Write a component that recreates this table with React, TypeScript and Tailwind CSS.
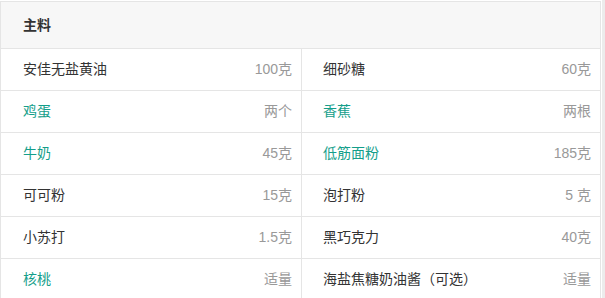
const rows: [string, string, boolean, string, string, boolean][] = [
  ["安佳无盐黄油", "100克", false, "细砂糖", "60克", false],
  ["鸡蛋", "两个", true, "香蕉", "两根", true],
  ["牛奶", "45克", true, "低筋面粉", "185克", true],
  ["可可粉", "15克", false, "泡打粉", "5 克", false],
  ["小苏打", "1.5克", false, "黑巧克力", "40克", false],
  ["核桃", "适量", true, "海盐焦糖奶油酱（可选）", "适量", false],
]

function Cell({ name, amount, green, left }: { name: string; amount: string; green: boolean; left?: boolean }) {
  return (
    <div
      className={
        left
          ? "h-[42px] border-b border-r border-[#e5e5e5] flex items-center justify-between pl-[22px] pr-[9px]"
          : "h-[42px] border-b border-[#e5e5e5] flex items-center justify-between pl-[21px] pr-[9px]"
      }
    >
      <span className={green ? "text-[#149e8a]" : "text-[#333]"}>{name}</span>
      <span className="text-[#999]">{amount}</span>
    </div>
  )
}

export default function App() {
  return (
    <div
      className="flex bg-white h-[298px] overflow-hidden text-[14px] pt-px"
      style={{ fontFamily: '"Liberation Sans", "Noto Sans CJK SC", sans-serif' }}
    >
      <div className="w-[601px] shrink-0 border-l border-r border-t border-[#e5e5e5]">
        <div className="h-[47px] bg-[#f7f7f7] border-b border-[#e5e5e5] flex items-center pl-[22px] font-bold text-[#333]">
          主料
        </div>
        <div className="grid grid-cols-[301px_298px]">
          {rows.map((r, i) => (
            <div key={i} className="contents">
              <Cell name={r[0]} amount={r[1]} green={r[2]} left />
              <Cell name={r[3]} amount={r[4]} green={r[5]} />
            </div>
          ))}
        </div>
      </div>
      <div className="w-px shrink-0" />
      <div className="flex-1 bg-[#ececec] -mt-px" />
    </div>
  )
}
